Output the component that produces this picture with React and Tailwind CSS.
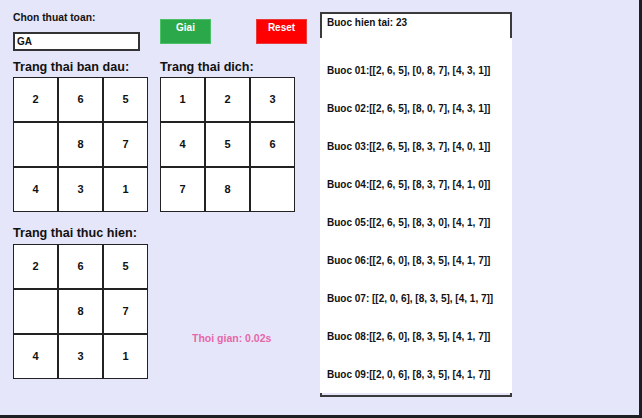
import React from "react";

const start = [
  [2, 6, 5],
  [0, 8, 7],
  [4, 3, 1],
];
const goal = [
  [1, 2, 3],
  [4, 5, 6],
  [7, 8, 0],
];
const steps = [
  "Buoc 01:[[2, 6, 5], [0, 8, 7], [4, 3, 1]]",
  "Buoc 02:[[2, 6, 5], [8, 0, 7], [4, 3, 1]]",
  "Buoc 03:[[2, 6, 5], [8, 3, 7], [4, 0, 1]]",
  "Buoc 04:[[2, 6, 5], [8, 3, 7], [4, 1, 0]]",
  "Buoc 05:[[2, 6, 5], [8, 3, 0], [4, 1, 7]]",
  "Buoc 06:[[2, 6, 0], [8, 3, 5], [4, 1, 7]]",
  "Buoc 07: [[2, 0, 6], [8, 3, 5], [4, 1, 7]]",
  "Buoc 08:[[2, 6, 0], [8, 3, 5], [4, 1, 7]]",
  "Buoc 09:[[2, 0, 6], [8, 3, 5], [4, 1, 7]]",
];

const Board = ({ board }) => (
  <div className="grid grid-cols-3 w-[135px]">
    {board.flat().map((n, i) => (
      <div
        key={i}
        className="h-[45px] border border-[#222] bg-white flex items-center justify-center text-[11px]"
      >
        {n !== 0 ? n : ""}
      </div>
    ))}
  </div>
);

export default function App() {
  return (
    <div className="w-[642px] h-[418px] bg-[#e6e6fa] border-r-[3px] border-b-[3px] border-[#1e1e24] flex font-['Liberation_Sans',Arial,sans-serif] font-bold text-[#111]">
      {/* left side */}
      <div className="w-[320px] pl-[13px] flex flex-col">
        <div className="flex items-start">
          <div className="w-[135px]">
            <div className="pt-[12px] leading-[12px] text-[10.3px]">Chon thuat toan:</div>
            <div className="mt-[8px] w-[127px] h-[19px] border-2 border-[#333] bg-white px-[2px] text-[10px] leading-[15px]">
              GA
            </div>
          </div>
          <button className="ml-[12px] mt-[19px] w-[51px] h-[25px] bg-[#2ba84a] border border-[#4cc066] text-white text-[10px] leading-[12px] pb-[8px] font-bold">
            Giai
          </button>
          <button className="ml-[45px] mt-[19px] w-[51px] h-[25px] bg-[#ff0000] border border-[#e83a3a] text-white text-[10px] leading-[12px] pb-[8px] font-bold">
            Reset
          </button>
        </div>

        <div className="flex gap-[12px] mt-[9px]">
          <div>
            <div className="text-[12.6px] leading-[14px] mb-[3px]">Trang thai ban dau:</div>
            <Board board={start} />
          </div>
          <div>
            <div className="text-[12.6px] leading-[14px] mb-[3px]">Trang thai dich:</div>
            <Board board={goal} />
          </div>
        </div>

        <div className="mt-[14px] text-[12.6px] leading-[14px] mb-[4px]">Trang thai thuc hien:</div>
        <div className="flex items-start">
          <Board board={start} />
          <div className="ml-[44px] mt-[88px] text-[10.5px] leading-[12px] text-[#e667a8]">
            Thoi gian: 0.02s
          </div>
        </div>
      </div>

      {/* steps panel */}
      <div className="w-[192px] mt-[12px] flex flex-col self-start">
        <div className="h-[26px] bg-white border-t-2 border-x-2 border-[#3a3a3a] pl-[5px] pt-[3px] leading-[12px] text-[10px]">
          Buoc hien tai: 23
        </div>
        <div className="bg-white pt-[13px]">
          {steps.map((s) => (
            <div key={s} className="h-[38px] flex items-center pl-[7px] text-[10px]">
              {s}
            </div>
          ))}
        </div>
        <div className="h-[4px] border-x-2 border-b-2 border-[#3a3a3a]" />
      </div>
    </div>
  );
}
